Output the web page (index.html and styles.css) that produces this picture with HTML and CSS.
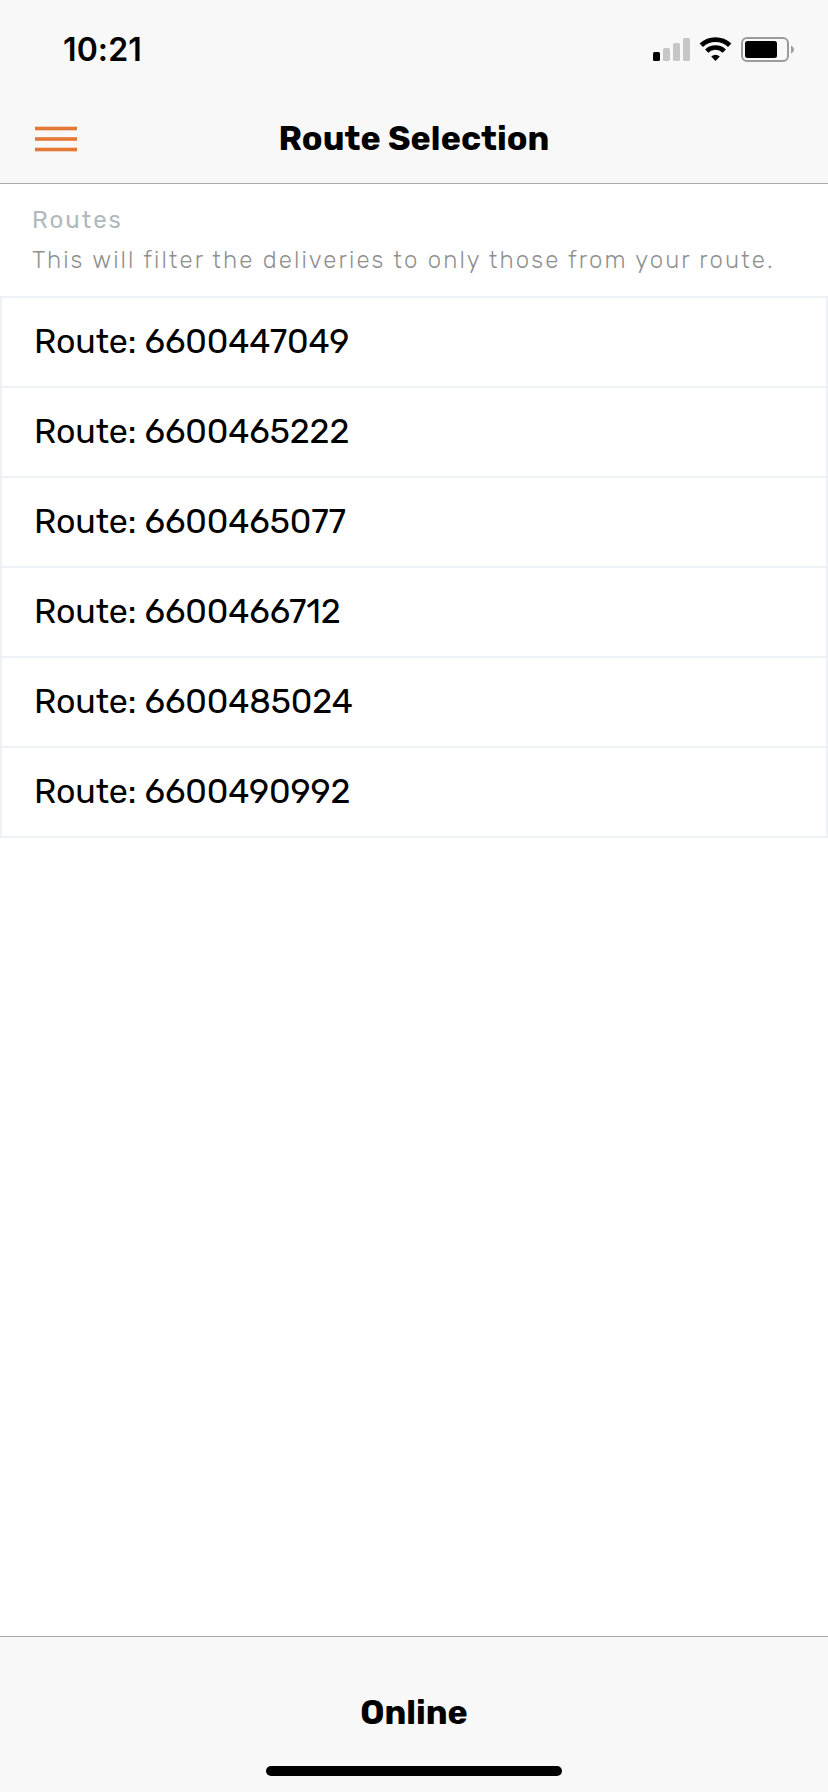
FILE: index.html
```html
<!DOCTYPE html>
<html lang="en">
<head>
<meta charset="utf-8">
<title>Route Selection</title>
<link rel="stylesheet" href="styles.css">
</head>
<body>
<div class="screen">
  <header class="header">
    <div class="status">
      <span class="time">10:21</span>
      <svg class="status-icons" width="144" height="28" viewBox="652 36 144 28">
        <rect x="653" y="52" width="7" height="9" rx="1.6"/>
        <g fill="#c6c6c6">
          <rect x="663" y="48" width="7" height="13" rx="1.6"/>
          <rect x="673" y="43" width="7" height="18" rx="1.6"/>
          <rect x="683" y="38" width="7" height="23" rx="1.6"/>
        </g>
        <g fill="none" stroke="#000">
          <path d="M701.3 45.3A20.4 20.4 0 0 1 729.7 45.3" stroke-width="4.8"/>
          <path d="M706.7 51.1A12.7 12.7 0 0 1 724.3 51.1" stroke-width="4.6"/>
        </g>
        <path d="M711.2 56.6Q715.5 52.8 719.8 56.6L715.5 61Z"/>
        <rect x="742" y="38" width="46" height="23" rx="5" fill="none" stroke="#9b9b9b" stroke-width="2"/>
        <rect x="745" y="41" width="32" height="17" rx="2.5"/>
        <path d="M791 45.5Q794 46.8 794 49.5T791 53.5Z" fill="#9b9b9b"/>
      </svg>
    </div>
    <nav class="nav">
      <svg class="menu" width="42" height="26" viewBox="0 0 42 26" fill="#e37734">
        <rect y="0.7" width="42" height="3.6"/>
        <rect y="11.2" width="42" height="3.6"/>
        <rect y="21.7" width="42" height="3.6"/>
      </svg>
      <h1 class="title">Route Selection</h1>
    </nav>
  </header>
  <main class="content">
    <section class="intro">
      <h2 class="intro-title">Routes</h2>
      <p class="intro-text">This will filter the deliveries to only those from your route.</p>
    </section>
    <ul class="routes">
      <li class="route">Route: 6600447049</li>
      <li class="route">Route: 6600465222</li>
      <li class="route">Route: 6600465077</li>
      <li class="route">Route: 6600466712</li>
      <li class="route">Route: 6600485024</li>
      <li class="route">Route: 6600490992</li>
    </ul>
  </main>
  <footer class="footer">
    <span class="online">Online</span>
    <div class="home-bar"></div>
  </footer>
</div>
</body>
</html>
```
FILE: styles.css
```css
* { box-sizing: border-box; margin: 0; padding: 0; }
body { background: #fff; color: #000; font-family: Rubik, Roboto, "Liberation Sans", sans-serif; }
.screen { display: flex; flex-direction: column; width: 828px; height: 1792px; overflow: hidden; white-space: nowrap; }
.header { height: 184px; background: #f8f8f8; border-bottom: 1px solid #aaa; }
.status { display: flex; justify-content: space-between; align-items: center; height: 92px; padding: 7px 32px 0 63px; }
.time { font: 600 32px Inter, sans-serif; letter-spacing: 0.1px; }
.status-icons { display: block; margin-top: 1px; }
.nav { display: grid; grid-template-columns: 244px 1fr 244px; align-items: center; height: 92px; }
.menu { display: block; margin: 2px 0 0 35px; }
.title { justify-self: center; font-size: 34px; font-weight: 700; letter-spacing: 0.06px; }
.content { flex: 1; }
.intro { padding: 16px 32px; line-height: 40px; font-size: 24px; }
.intro-title { font-size: 24px; font-weight: 400; letter-spacing: 2px; color: #b0b9bc; }
.intro-text { font-weight: 300; letter-spacing: 2.08px; color: #8f8f8f; }
.routes { list-style: none; border: 2px solid #eef2f6; }
.route { height: 90px; padding-left: 32px; border-bottom: 2px solid #eef2f6; font-size: 34px; line-height: 88px; letter-spacing: -0.12px; }
.route:last-child { height: 88px; border-bottom: 0; }
.footer { display: flex; flex-direction: column; align-items: center; height: 156px; padding-top: 56px; background: #f8f8f8; border-top: 1px solid #aaa; }
.online { height: 40px; line-height: 40px; font-size: 34px; font-weight: 700; }
.home-bar { width: 296px; height: 10px; margin-top: 33px; border-radius: 5px; background: #000; }
```
